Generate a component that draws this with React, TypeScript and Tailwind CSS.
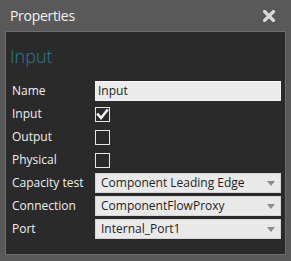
const FONT = { fontFamily: '"Open Sans", "Noto Sans", sans-serif' };

function Check({ checked }: { checked?: boolean }) {
  return (
    <div className="w-[15px] h-[15px] border border-[#e6e6e6] flex items-center justify-center">
      {checked && (
        <svg width="13" height="13" viewBox="0 0 13 13">
          <path d="M2 6.5 L5 10 L11 2.5" fill="none" stroke="#f2f2f2" strokeWidth="2.6" strokeLinecap="square" />
        </svg>
      )}
    </div>
  );
}

function Select({ value }: { value: string }) {
  return (
    <div className="h-[20px] flex-1 flex items-center justify-between bg-[#e9e9e9] border border-[#d6d6d6] pl-[5px] pr-[5px]">
      <span className="text-[12px] text-[#1e1e1e] leading-none">{value}</span>
      <svg width="8" height="5" viewBox="0 0 8 5">
        <path d="M0 0 H8 L4 5 Z" fill="#8a8a8a" />
      </svg>
    </div>
  );
}

function Row({ label, children }: { label: string; children: React.ReactNode }) {
  return (
    <div className="flex items-center h-[20px]">
      <div className="w-[89px] pl-[6px] text-[12px] text-[#f0f0f0] leading-none">{label}</div>
      <div className="flex-1 flex items-center">{children}</div>
    </div>
  );
}

export default function App() {
  return (
    <div className="w-[291px] h-[261px] bg-[#595959] flex flex-col" style={FONT}>
      {/* Title bar */}
      <div className="h-[31px] flex items-center justify-between pl-[10px] pr-[16px]">
        <span className="text-[14px] tracking-[-0.3px] text-[#f2f2f2]">Properties</span>
        <svg width="12" height="12" viewBox="0 0 12 12">
          <path d="M1.5 1.5 L10.5 10.5 M10.5 1.5 L1.5 10.5" stroke="#d9d9d9" strokeWidth="3.2" strokeLinecap="square" />
        </svg>
      </div>

      {/* Panel */}
      <div className="mx-[5px] mb-[6px] flex-1 bg-[#2a2a2a] border border-[#6e6e6e] pr-[4px]">
        <div className="pl-[4px] pt-[11px] h-[49px] text-[18px] font-light text-[#2b7b98]">Input</div>
        <div className="flex flex-col gap-[3px]">
          <Row label="Name">
            <div className="h-[20px] flex-1 flex items-center bg-[#ebebeb] border border-[#f5f5f5] pl-[2px]">
              <span className="text-[12px] text-[#1e1e1e] leading-none">Input</span>
            </div>
          </Row>
          <Row label="Input"><Check checked /></Row>
          <Row label="Output"><Check /></Row>
          <Row label="Physical"><Check /></Row>
          <Row label="Capacity test"><Select value="Component Leading Edge" /></Row>
          <Row label="Connection"><Select value="ComponentFlowProxy" /></Row>
          <Row label="Port"><Select value="Internal_Port1" /></Row>
        </div>
      </div>
    </div>
  );
}
